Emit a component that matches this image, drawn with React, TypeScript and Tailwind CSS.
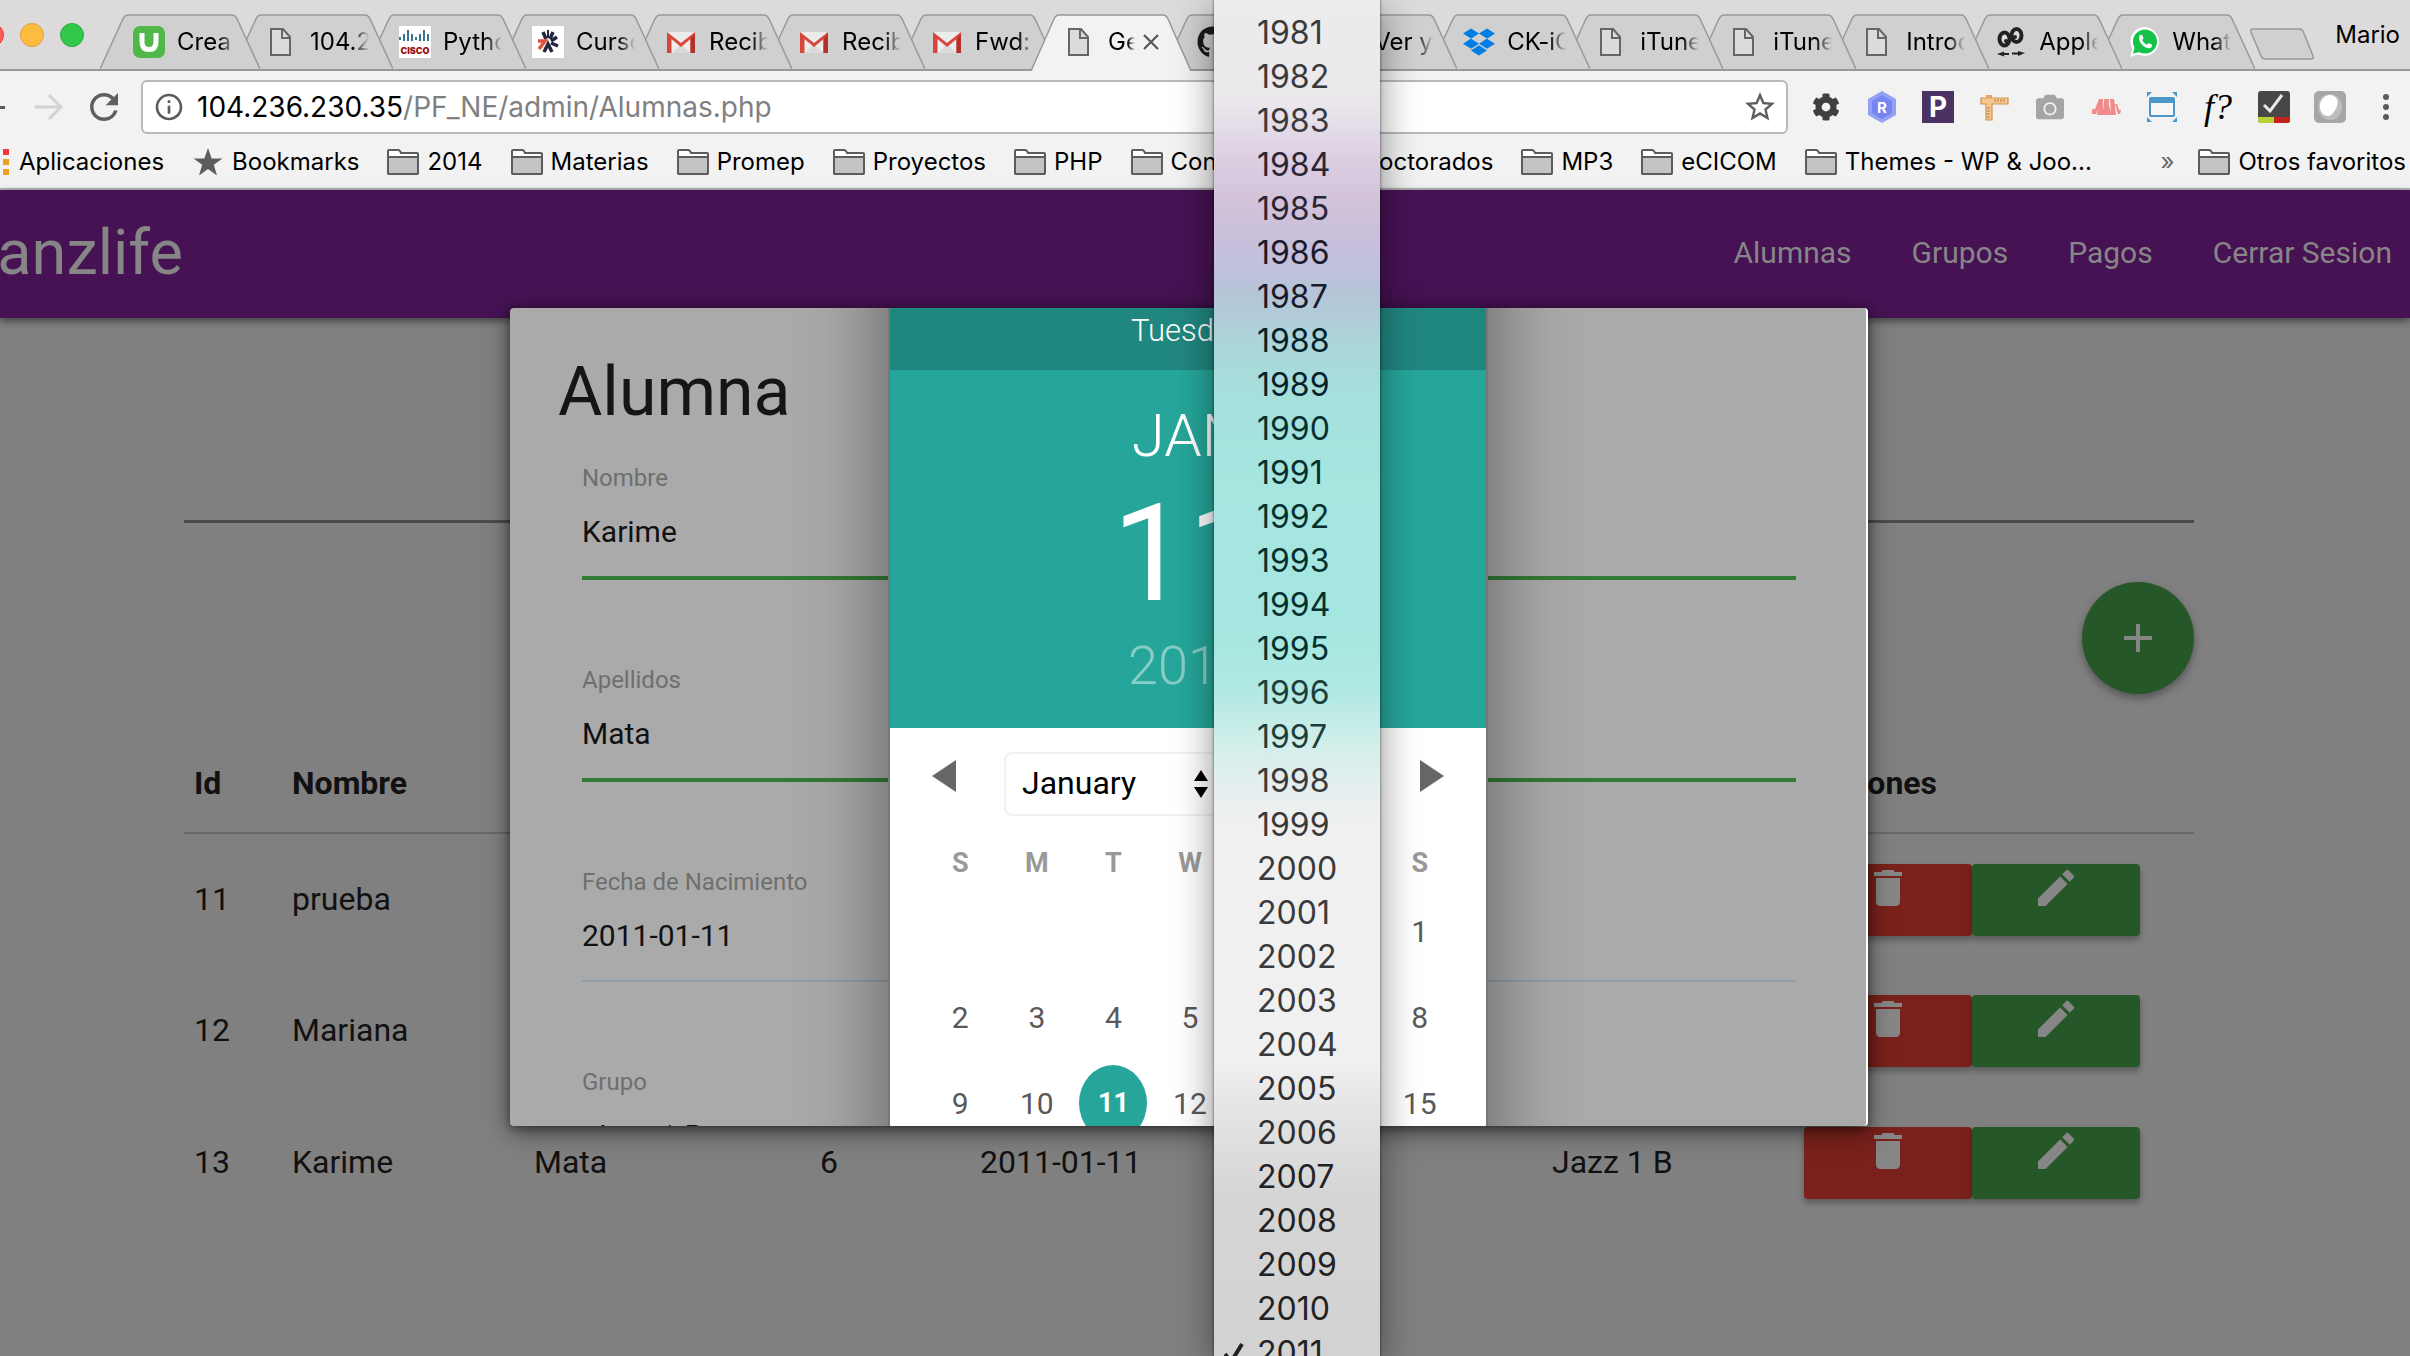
import React from "react";
import { MdAdd, MdDelete, MdEdit, MdRefresh, MdStarBorder, MdInfoOutline } from "react-icons/md";
import { FaCog, FaCamera, FaDropbox, FaGithub } from "react-icons/fa";

/* ---------- favicons ---------- */

const DocIcon = () => (
  <svg viewBox="0 0 32 32" className="size-8" fill="none" stroke="#666" strokeWidth="2">
    <path d="M5 3H17L24 11V29H5Z" fill="#dcdcdc" />
    <path d="M16 3V12H24" />
  </svg>
);

const UIcon = () => (
  <svg viewBox="0 0 32 32" className="size-8">
    <rect width="32" height="32" rx="7" fill="#4fb848" />
    <path d="M9 7V16C9 21 11.500 23.500 16 23.500S23 21 23 16V7" fill="none" stroke="#fff" strokeWidth="5" />
  </svg>
);

const CiscoIcon = () => (
  <span className="flex size-8 flex-col items-center justify-between bg-white">
    <svg viewBox="0 0 32 16" className="h-4 w-8" stroke="#3d7391" strokeWidth="2">
      <path d="M1 11V14M5 8V15M9 4V15M13 8V15M17 11V14M21 8V15M25 4V15M29 8V15" />
    </svg>
    <span className="text-[9px] leading-[14px] font-black text-[#a01010]">CISCO</span>
  </span>
);

const StarBurstIcon = () => (
  <svg viewBox="0 0 32 32" className="size-8">
    <rect width="32" height="32" fill="#fff" />
    <g strokeWidth="3.500" fill="none">
      <path d="M11 6L14 13M21 6L18 13M25 11L19 15M26 20L19 17" stroke="#25253d" />
      <path d="M12 26L16 18L20 26" stroke="#25253d" />
      <path d="M6 15H13L7 23" stroke="#e0523f" />
      <path d="M16 4V12" stroke="#25253d" strokeWidth="2" />
    </g>
  </svg>
);

const GmailIcon = () => (
  <svg viewBox="0 0 32 32" className="size-8">
    <path d="M2 6H30V27H2Z" fill="#ececec" />
    <path d="M7 27L16 18L26 27Z" fill="#dadada" />
    <path d="M2 6L16 17L30 6V27H25.500V13L16 21L6.500 13V27H2Z" fill="#d8453a" />
    <path d="M25.500 13L30 8V27H25.500Z" fill="#b5302a" />
  </svg>
);

const GithubIcon = () => <FaGithub className="size-8 text-[#1b1b1b]" />;
const DropboxIcon = () => <FaDropbox className="size-8 text-[#007ee5]" />;

const EyesIcon = () => (
  <svg viewBox="0 0 32 32" className="size-8">
    <g fill="#ddd" stroke="#222" strokeWidth="4">
      <ellipse cx="9.500" cy="13" rx="5" ry="6.500" />
      <ellipse cx="21.500" cy="9.500" rx="5" ry="6.500" />
    </g>
    <circle cx="11" cy="15" r="2" fill="#222" />
    <circle cx="20" cy="11" r="2" fill="#222" />
    <path d="M2 28L9 25.500V27H14V29H9V30.500ZM30 27L23 25V26.500H17V28.500H23V30Z" fill="#222" />
  </svg>
);

const WhatsAppIcon = () => (
  <svg viewBox="0 0 32 32" className="size-8">
    <path d="M17 1A14.500 14.500 0 1 1 10 28.500L2 31L4.500 23A14.500 14.500 0 0 1 17 1Z" fill="#fff" />
    <circle cx="17" cy="15.500" r="12" fill="#15c34a" />
    <path d="M5 27.500L7 20L12 26Z" fill="#15c34a" />
    <path
      d="M11.500 9.500C12.500 8.500 14 8.500 14.400 9.500L15.400 12C15.600 12.700 14.500 13.500 14.200 14C15 16 17 18 19 18.700C19.600 18.200 20.300 17 21 17.300L23.700 18.600C24.500 19 24 21 22.800 21.800C18 24.500 9 16 11.500 9.500Z"
      fill="#fff"
    />
  </svg>
);

type Tab = { title: string; icon: React.FC; active?: boolean };

const tabs: Tab[] = [
  { title: "Crea", icon: UIcon },
  { title: "104.2", icon: DocIcon },
  { title: "Python", icon: CiscoIcon },
  { title: "Curso", icon: StarBurstIcon },
  { title: "Recibi", icon: GmailIcon },
  { title: "Recibi", icon: GmailIcon },
  { title: "Fwd:", icon: GmailIcon },
  { title: "Gestion", icon: DocIcon, active: true },
  { title: "GitHub", icon: GithubIcon },
  { title: "Ver y", icon: DocIcon },
  { title: "CK-iO", icon: DropboxIcon },
  { title: "iTunes", icon: DocIcon },
  { title: "iTunes", icon: DocIcon },
  { title: "Introd", icon: DocIcon },
  { title: "Apple", icon: EyesIcon },
  { title: "Whats", icon: WhatsAppIcon },
];

function BrowserTab({ tab, order }: { tab: Tab; order: number }) {
  const Icon = tab.icon;
  return (
    <div
      className={
        tab.active
          ? "relative -mb-[2px] -ml-[27px] h-[57px] min-w-0 flex-1"
          : "relative -ml-[27px] h-[55px] min-w-0 flex-1"
      }
      style={{ zIndex: order }}
    >
      <svg viewBox="0 0 160 57" preserveAspectRatio="none" className="absolute inset-0 h-full w-full">
        <path
          d="M0 57L23 5Q25 1 28 1H132Q135 1 137 5L160 57"
          fill={tab.active ? "#f2f2f2" : "#d0d0d0"}
          stroke="#999"
          strokeWidth="1.500"
        />
      </svg>
      <div className={tab.active ? "relative flex h-[56px] items-center pr-8 pl-[33px]" : "relative flex h-[56px] items-center pr-6 pl-[33px]"}>
        <Icon />
        <span className="ml-3 min-w-0 flex-1 overflow-hidden whitespace-nowrap [mask-image:linear-gradient(to_right,black_72%,transparent)]">
          {tab.title}
        </span>
        {tab.active && (
          <button aria-label="Cerrar pestaña" className="ml-2">
            <svg viewBox="0 0 16 16" className="size-4" stroke="#555" strokeWidth="2.200">
              <path d="M1 1L15 15M15 1L1 15" />
            </svg>
          </button>
        )}
      </div>
    </div>
  );
}

/* ---------- toolbar extensions ---------- */

const extensions: { name: string; icon: React.ReactNode }[] = [
  { name: "Ajustes", icon: <FaCog className="size-7 text-[#3f3f3f]" /> },
  {
    name: "R",
    icon: (
      <span className="relative flex size-8 items-center justify-center">
        <svg viewBox="0 0 32 32" className="absolute inset-0 size-8">
          <path d="M16 0L30 8V24L16 32L2 24V8Z" fill="#93a0f6" />
          <path d="M16 4L26 10V22L16 28L6 22V10Z" fill="#7586f0" />
        </svg>
        <span className="relative text-[15px] leading-none font-bold text-white">R</span>
      </span>
    ),
  },
  {
    name: "P",
    icon: (
      <span className="flex size-8 items-center justify-center bg-[#4b3263] text-[28px] leading-none font-bold text-white">
        P
      </span>
    ),
  },
  {
    name: "Regla",
    icon: (
      <svg viewBox="0 0 32 32" className="size-8">
        <path d="M3 7H30V13H14V29H8V13H3Z" fill="#f6c891" stroke="#cf9154" strokeWidth="1.200" />
        <path d="M8 4H14V7H8Z" fill="#e7a660" />
        <path d="M17 8V11M20 8V11M23 8V11M26 8V11M9 17H12M9 20H12M9 23H12M9 26H12" stroke="#b87a3e" />
      </svg>
    ),
  },
  { name: "Captura", icon: <FaCamera className="size-7 text-[#a5a5a5]" /> },
  {
    name: "M",
    icon: (
      <svg viewBox="0 0 32 32" className="size-8" fill="#f2898d">
        <path d="M2 18H5L9 8H13L12 24H7L8 18L6 23H2Z" />
        <path d="M14 8H19L18 24H13Z" />
        <path d="M20 8H24L26 24H21Z" />
        <path d="M25 13L27 13L29 19H31L30 23H28Z" />
        <path d="M12 12L15 24H11ZM18 12L22 24H17Z" />
      </svg>
    ),
  },
  {
    name: "Ventana",
    icon: (
      <svg viewBox="0 0 32 32" className="size-8">
        <path d="M1 6V1H6ZM26 1H31V6ZM31 26V31H26ZM6 31H1V26Z" fill="#4b97c6" />
        <rect x="4" y="7" width="24" height="18" rx="1" fill="#f6f6f6" stroke="#4b97c6" strokeWidth="2" />
        <path d="M4 7H28V12H4Z" fill="#4b97c6" />
      </svg>
    ),
  },
  {
    name: "Fuente",
    icon: (
      <span className="flex size-8 items-center justify-center font-[Liberation_Serif,serif] text-[36px] leading-none text-black italic">
        f?
      </span>
    ),
  },
  {
    name: "Check",
    icon: (
      <svg viewBox="0 0 32 32" className="size-8">
        <rect width="32" height="32" rx="3" fill="#474747" />
        <path d="M0 26H16V32H3Q0 32 0 29Z" fill="#b5d334" />
        <path d="M16 26H32V29Q32 32 29 32H16Z" fill="#c4221d" />
        <path d="M6 14L12 20L24 4" fill="none" stroke="#e8e8e8" strokeWidth="3" />
      </svg>
    ),
  },
  {
    name: "Globo",
    icon: (
      <svg viewBox="0 0 32 32" className="size-8">
        <rect width="32" height="32" rx="5" fill="#a6a6a6" />
        <ellipse cx="16" cy="16" rx="12" ry="13" fill="#bdbdbd" />
        <path d="M16 4C22 4 25 9 23 15C21 21 17 25 14 25C8 25 5 19 6 13C7 8 11 4 16 4Z" fill="#fff" />
      </svg>
    ),
  },
  {
    name: "Menú",
    icon: (
      <svg viewBox="0 0 32 32" className="size-8" fill="#595959">
        <circle cx="16" cy="6" r="3" />
        <circle cx="16" cy="16" r="3" />
        <circle cx="16" cy="26" r="3" />
      </svg>
    ),
  },
];

const Folder = () => (
  <svg viewBox="0 0 32 28" className="h-7 w-8 shrink-0" stroke="#5c5c5c" strokeWidth="2">
    <path d="M1 24V3Q1 2 2 2H11Q12 2 13 3L14 5H30Q31 5 31 6V24Q31 26 30 26H2Q1 26 1 24Z" fill="#fff" />
    <path d="M1 9H31V24Q31 26 30 26H2Q1 26 1 24Z" fill="#c4c4c4" />
  </svg>
);

function Bookmark({ children }: { children: React.ReactNode }) {
  return (
    <a href="#" className="flex items-center gap-2">
      <Folder />
      {children}
    </a>
  );
}

function BrowserChrome() {
  return (
    <header className="border-b-2 border-[#b4b4b4] bg-[#f2f2f2] font-[Inter,sans-serif] text-[24px] leading-8 text-black">
      <div className="flex h-[71px] items-end border-b-2 border-[#999] bg-[#dcdada] pr-2.5">
        <div className="mb-[22px] -ml-5 flex w-[147px] shrink-0 gap-4">
          <button aria-label="Cerrar" className="size-6 rounded-full border border-[#e0443e] bg-[#fc5b57]" />
          <button aria-label="Minimizar" className="size-6 rounded-full border border-[#dea03a] bg-[#fdbc40]" />
          <button aria-label="Maximizar" className="size-6 rounded-full border border-[#2bac3c] bg-[#34c84a]" />
        </div>
        <div className="isolate flex min-w-0 flex-1 items-end">
          {tabs.map((t, i) => (
            <BrowserTab key={i} tab={t} order={t.active ? 50 : tabs.length - i} />
          ))}
        </div>
        <button aria-label="Nueva pestaña" className="mb-2 -ml-1.5">
          <svg viewBox="0 0 66 34" className="h-[34px] w-[66px]">
            <path
              d="M4 2H50Q53 2 54 4L64 29Q65 32 62 32H17Q13 32 12 29L2 5Q1 2 4 2Z"
              fill="#d0d0d0"
              stroke="#999"
              strokeWidth="1.500"
            />
          </svg>
        </button>
        <span className="mb-[18px] ml-5">Mario</span>
      </div>

      <div className="flex h-[72px] items-center pr-2">
        <span className="h-[3px] w-[5px] bg-[#595959]" />
        <button aria-label="Adelante" className="ml-[30px]">
          <svg viewBox="0 0 28 28" className="size-7" fill="none" stroke="#d2d2d2" strokeWidth="3">
            <path d="M0 14H25M14 2L26 14L14 26" />
          </svg>
        </button>
        <button aria-label="Recargar" className="ml-5">
          <MdRefresh className="size-[42px] text-[#5f5f5f]" />
        </button>
        <div className="ml-4 flex h-[54px] flex-1 items-center rounded-md border-2 border-[#b9b9b9] bg-white pr-2 pl-2.5 text-[28px]">
          <MdInfoOutline className="size-8 text-[#5c5c5c]" />
          <span className="ml-3 flex-1">
            104.236.230.35<span className="text-[#808080]">/PF_NE/admin/Alumnas.php</span>
          </span>
          <button aria-label="Favorito">
            <MdStarBorder className="size-9 text-[#5f5f5f]" />
          </button>
        </div>
        <div className="ml-[22px] flex gap-6">
          {extensions.map((e) => (
            <button key={e.name} aria-label={e.name} className="flex size-8 items-center justify-center">
              {e.icon}
            </button>
          ))}
        </div>
      </div>

      <nav className="flex h-[45px] items-center gap-7 overflow-hidden pr-1 pb-2 whitespace-nowrap">
        <a href="#" className="flex items-center gap-2.5 pl-[3px]">
          <span className="flex flex-col gap-1">
            <i className="size-1.5 bg-[#f2383a]" />
            <i className="size-1.5 bg-[#f0a020]" />
            <i className="size-1.5 bg-[#f0a020]" />
          </span>
          Aplicaciones
        </a>
        <a href="#" className="flex items-center gap-2">
          <svg viewBox="0 0 32 32" className="size-8 shrink-0" fill="#5c5c5c">
            <path d="M16 2L19.600 12.400H30.500L21.800 18.800L25 29.500L16 23L7 29.500L10.200 18.800L1.500 12.400H12.400Z" />
          </svg>
          Bookmarks
        </a>
        <Bookmark>2014</Bookmark>
        <Bookmark>Materias</Bookmark>
        <Bookmark>Promep</Bookmark>
        <Bookmark>Proyectos</Bookmark>
        <Bookmark>PHP</Bookmark>
        <Bookmark>Congresos</Bookmark>
        <Bookmark>Doctorados</Bookmark>
        <Bookmark>MP3</Bookmark>
        <Bookmark>eCICOM</Bookmark>
        <Bookmark>Themes - WP &amp; Joo...</Bookmark>
        <button aria-label="Más marcadores" className="-mr-1 ml-auto text-[#666]">
          »
        </button>
        <Bookmark>Otros favoritos</Bookmark>
      </nav>
    </header>
  );
}

/* ---------- page behind the modal ---------- */

const rows = [
  ["11", "prueba", "", "", "", "", ""],
  ["12", "Mariana", "", "", "", "", ""],
  ["13", "Karime", "Mata", "6", "2011-01-11", "", "Jazz 1 B"],
];

function StudentsPage() {
  return (
    <main className="flex-1 bg-[#808080] font-[Roboto,sans-serif] text-[#111]">
      <nav className="relative flex h-32 items-center justify-between bg-[#461253] pr-[18px] pb-[3px] text-[30px] text-[#868686] shadow-[0_3px_8px_rgba(0,0,0,0.5)]">
        <a href="#" className="-ml-11 text-[63px] leading-none">
          Danzlife
        </a>
        <div className="flex gap-[60px]">
          <a href="#">Alumnas</a>
          <a href="#">Grupos</a>
          <a href="#">Pagos</a>
          <a href="#">Cerrar Sesion</a>
        </div>
      </nav>
      <div className="pr-[216px] pl-[184px]">
        <hr className="mt-[202px] border-t-[3px] border-[#4c4c4c]" />
        <div className="mt-[59px] flex justify-end">
          <button
            aria-label="Agregar alumna"
            className="flex size-28 items-center justify-center rounded-full bg-[#265728] text-[#868686] shadow-[0_4px_8px_rgba(0,0,0,0.35)]"
          >
            <MdAdd className="size-12" />
          </button>
        </div>
        <table className="mt-[39px] w-full table-fixed border-collapse text-[32px] leading-[48px]">
          <thead>
            <tr className="h-[100px] border-b-2 border-[#696969] text-left">
              <th className="w-[98px] px-2.5 font-bold">Id</th>
              <th className="w-[242px] px-2.5 font-bold">Nombre</th>
              <th className="w-[286px] px-2.5" />
              <th className="w-[160px] px-2.5" />
              <th className="w-[285px] px-2.5" />
              <th className="px-2.5" />
              <th className="w-[252px] px-2.5" />
              <th className="w-[400px] px-2.5 font-bold">Acciones</th>
            </tr>
          </thead>
          <tbody>
            {rows.map((r) => (
              <tr key={r[0]} className="h-[132px]">
                {r.map((c, i) => (
                  <td key={i} className="px-2.5 pb-[2px]">
                    {c}
                  </td>
                ))}
                <td className="px-2.5">
                  <div className="flex text-[#868686]">
                    <button
                      aria-label="Eliminar"
                      className="flex h-[72px] w-[168px] justify-center rounded bg-[#7a211b] shadow-[0_4px_6px_rgba(0,0,0,0.3)]"
                    >
                      <MdDelete className="size-12" />
                    </button>
                    <button
                      aria-label="Editar"
                      className="flex h-[72px] w-[168px] justify-center rounded bg-[#265728] shadow-[0_4px_6px_rgba(0,0,0,0.3)]"
                    >
                      <MdEdit className="size-12" />
                    </button>
                  </div>
                </td>
              </tr>
            ))}
          </tbody>
        </table>
      </div>
    </main>
  );
}

/* ---------- date picker ---------- */

const weeks = [
  ["", "", "", "", "", "", "1"],
  ["2", "3", "4", "5", "6", "7", "8"],
  ["9", "10", "11", "12", "13", "14", "15"],
];

function DatePicker() {
  return (
    <div className="absolute -inset-y-24 left-1/2 w-[596px] -translate-x-1/2 bg-white text-center shadow-[0_0_0_2px_#777,0_0_84px_rgba(0,0,0,0.47)]">
      <div className="h-[158px] bg-[#20877f] pt-24 text-[31px] leading-[46px] font-light text-white">Tuesday</div>
      <div className="bg-[#26a69a] pt-[26px] pb-7 text-white">
        <div className="text-[60px] leading-[80px] font-light">JAN</div>
        <div className="text-[135px] leading-[156px]">11</div>
        <div className="text-[54px] leading-[68px] font-light text-white/45">2011</div>
      </div>
      <div className="flex h-[108px] justify-between px-[30px] pt-6">
        <button aria-label="Mes anterior" className="flex size-12 items-center justify-center">
          <svg viewBox="0 0 24 32" className="h-8 w-6" fill="#666">
            <path d="M24 0V32L0 16Z" />
          </svg>
        </button>
        <div className="flex gap-1">
          <div className="relative">
            <select
              aria-label="Mes"
              className="h-16 w-[216px] appearance-none rounded-lg border-2 border-[#f2f2f2] bg-white pb-0.5 pl-4 text-[32px] text-black"
            >
              <option>January</option>
            </select>
            <svg viewBox="0 0 14 28" className="pointer-events-none absolute top-[18px] right-3 h-7 w-3.5" fill="#000">
              <path d="M7 0L14 11H0ZM0 17H14L7 28Z" />
            </svg>
          </div>
          <select
            aria-label="Año"
            className="h-16 w-[148px] appearance-none rounded-lg border-2 border-[#f2f2f2] bg-white pb-0.5 pl-4 text-[32px] text-black"
          >
            <option>2011</option>
          </select>
        </div>
        <button aria-label="Mes siguiente" className="flex size-12 items-center justify-center">
          <svg viewBox="0 0 24 32" className="h-8 w-6" fill="#666">
            <path d="M0 0V32L24 16Z" />
          </svg>
        </button>
      </div>
      <div className="pr-7 pl-8">
        <table className="w-full table-fixed text-[30px] text-[#595959]">
          <thead>
            <tr className="h-[52px] text-[27px] text-[#999]">
              {["S", "M", "T", "W", "T", "F", "S"].map((d, i) => (
                <th key={i} className="p-0 pt-0.5 font-bold">
                  {d}
                </th>
              ))}
            </tr>
          </thead>
          <tbody>
            {weeks.map((w, i) => (
              <tr key={i} className="h-[86px]">
                {w.map((d, j) => (
                  <td key={j} className="p-0">
                    {d === "11" ? (
                      <span className="mx-auto flex h-[76px] w-[68px] items-center justify-center rounded-[50%] bg-[#26a69a] text-[27px] font-bold text-white">
                        11
                      </span>
                    ) : (
                      d
                    )}
                  </td>
                ))}
              </tr>
            ))}
          </tbody>
        </table>
      </div>
    </div>
  );
}

function Field({ id, label, value, valid }: { id: string; label: string; value: string; valid?: boolean }) {
  return (
    <div className="flex flex-col">
      <label htmlFor={id} className="text-[24px] leading-6 text-[#6f6f6f]">
        {label}
      </label>
      <input
        id={id}
        defaultValue={value}
        className={
          valid
            ? "h-[90px] w-full border-b-4 border-[#337a35] bg-transparent pb-1 text-[30px] text-[#111] outline-none"
            : "h-[88px] w-full border-b-2 border-[#8f9da8] bg-transparent pb-1 text-[30px] text-[#111] outline-none"
        }
      />
    </div>
  );
}

function StudentModal() {
  return (
    <section
      role="dialog"
      aria-labelledby="modal-title"
      className="absolute top-[308px] right-[542px] left-[510px] h-[818px] rounded shadow-[0_6px_24px_rgba(0,0,0,0.5),0_2px_8px_rgba(0,0,0,0.4)]"
    >
      <div className="relative h-full overflow-hidden rounded border-r-2 border-white bg-[#aaa] px-12 pt-[46px] font-[Roboto,sans-serif]">
        <h4 id="modal-title" className="text-[68px] leading-[76px] text-[#151515]">
          Alumna
        </h4>
        <form className="mt-9 flex flex-col gap-[88px] pr-[22px] pl-6">
          <Field id="nombre" label="Nombre" value="Karime" valid />
          <Field id="apellidos" label="Apellidos" value="Mata" valid />
          <Field id="fecha" label="Fecha de Nacimiento" value="2011-01-11" />
          <div className="flex flex-col">
            <label htmlFor="grupo" className="text-[24px] leading-6 text-[#6f6f6f]">
              Grupo
            </label>
            <select id="grupo" className="h-[86px] appearance-none bg-transparent pb-1 pl-2 text-[30px] text-[#111]">
              <option>Jazz 1 B</option>
            </select>
          </div>
        </form>
        <DatePicker />
      </div>
    </section>
  );
}

/* ---------- open year list ---------- */

const years = Array.from({ length: 32 }, (_, i) => 1980 + i);

function yearColor(y: number) {
  if (y < 1984) return "text-[#3a3a3c]";
  if (y < 1986) return "text-[#2c2533]";
  if (y < 1988) return "text-[#1a1a2c]";
  if (y < 1990) return "text-[#03222a]";
  if (y < 1996) return "text-[#04312e]";
  if (y < 1998) return "text-[#1d3f3a]";
  if (y < 2005) return "text-[#3a3a3a]";
  if (y < 2007) return "text-[#303030]";
  return "text-[#222]";
}

function YearMenu() {
  return (
    <div className="absolute inset-y-0 left-[1214px] w-[166px] shadow-[0_10px_36px_rgba(0,0,0,0.45),0_0_2px_1px_rgba(0,0,0,0.3)]">
      <div className="h-full overflow-hidden bg-[linear-gradient(to_bottom,#ececec_0px,#ebe8ec_100px,#ddd0e3_155px,#d2c3da_200px,#c6bfdb_250px,#b5c5d8_295px,#acd6da_345px,#a5e0dc_400px,#a5e7e0_500px,#a5e7e0_630px,#b0e9e3_690px,#cdeeea_735px,#e2efee_780px,#f0f0f0_825px,#f0f0f0_1060px,#e2e2e2_1120px,#d6d6d6_1190px,#d2d2d2_1356px)] font-[Inter,sans-serif] text-[32px] leading-[44px]">
        <ul role="listbox" aria-label="Año" className="-mt-[33px]">
          {years.map((y) => (
            <li
              key={y}
              role="option"
              aria-selected={y === 2011}
              className={"flex items-center pl-2.5 " + yearColor(y)}
            >
              <span className="w-[33px]">
                {y === 2011 && (
                  <svg viewBox="0 0 20 24" className="h-6 w-5" fill="none" stroke="currentColor" strokeWidth="4">
                    <path d="M1 13L7 21L18 3" />
                  </svg>
                )}
              </span>
              {y}
            </li>
          ))}
        </ul>
      </div>
    </div>
  );
}

export default function App() {
  return (
    <div className="relative flex h-screen flex-col overflow-hidden">
      <BrowserChrome />
      <StudentsPage />
      <StudentModal />
      <YearMenu />
    </div>
  );
}
